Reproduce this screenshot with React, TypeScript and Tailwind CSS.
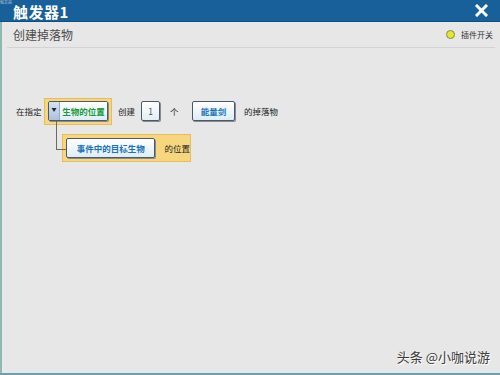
import React from "react";

const font = { fontFamily: '"Noto Sans CJK SC", "Noto Sans", sans-serif' };

export default function App() {
  return (
    <div className="relative w-[500px] h-[375px] overflow-hidden bg-[#e8e7e8]" style={font}>
      {/* title bar */}
      <div className="h-[22px] bg-[#17609a] flex items-center justify-between pl-[13px] pr-[12px] border-b border-[#0f4f80]">
        <span className="text-white font-bold text-[15px] leading-none tracking-[0.5px] pt-[2px]">触发器1</span>
        <svg width="13" height="13" viewBox="0 0 13 13">
          <path d="M2 2 L11 11 M11 2 L2 11" stroke="white" strokeWidth="3" strokeLinecap="square" />
        </svg>
      </div>
      <span className="absolute left-0 top-0 text-[4px] leading-none text-[#9fb7cc]">触发器</span>

      <div className="border-l-[2px] border-[#8fb8b0] h-[353px] flex flex-col">
        {/* header */}
        <div className="h-[26px] mx-[5px] flex items-center justify-between border-b border-[#d4d3d4] pl-[6px] pr-[2px]">
          <span className="text-[12px] text-[#4c4c4c] leading-none">创建掉落物</span>
          <div className="flex items-center gap-[6px]">
            <span className="w-[9px] h-[9px] rounded-full bg-[#e5e634] border border-[#8a8a3a]" />
            <span className="text-[8px] text-[#333]">插件开关</span>
          </div>
        </div>

        {/* content */}
        <div className="pl-[14px] pt-[49px] text-[8.5px] text-[#222] whitespace-nowrap">
          <div className="flex items-center h-[28px]">
            <span className="w-[28px]">在指定</span>
            <div className="bg-[#f6d77f] border border-[#e8bd55] px-[3px] py-[3px] w-[68px] h-[27px] flex items-center">
              <div className="flex h-[20px] w-[61px] border border-[#4a5a6a] rounded-[2px] shadow-[1px_1px_0_#8a8a8a] overflow-hidden">
                <div className="w-[11px] bg-gradient-to-b from-[#d3e3f1] to-[#a9c3dc] border-r border-[#9ab] flex items-start justify-center pt-[4px] text-[5px] leading-none text-[#223]">▼</div>
                <div className="flex-1 bg-gradient-to-b from-[#ffffff] to-[#dcedf7] flex items-center justify-center text-[#1b9a3a] font-bold">生物的位置</div>
              </div>
            </div>
            <span className="ml-[6px] w-[23px]">创建</span>
            <div className="w-[19px] h-[20px] border border-[#4a5a6a] rounded-[2px] bg-gradient-to-b from-white to-[#e3eef6] flex items-center justify-center shadow-[1px_1px_0_#8a8a8a] text-[#555]">1</div>
            <span className="ml-[10px] w-[22px] text-[#222]">个</span>
            <div className="w-[43px] h-[20px] border border-[#4a5a6a] rounded-[2px] bg-gradient-to-b from-white to-[#dcedf7] flex items-center justify-center shadow-[1px_1px_0_#8a8a8a] text-[#1b72b5] font-bold">能量剑</div>
            <span className="ml-[9px]">的掉落物</span>
          </div>

          <div className="relative flex ml-[46px] mt-[9px]">
            <div className="absolute left-[-6px] top-[-13px] w-[10px] h-[29px] border-l border-b border-[#6a6a6a]" />
            <div className="bg-[#f6d77f] border border-[#e8bd55] w-[129px] h-[28px] flex items-center pl-[3px]">
              <div className="w-[91px] h-[20px] border border-[#4a5a6a] rounded-[2px] bg-gradient-to-b from-white to-[#dcedf7] flex items-center justify-center shadow-[1px_1px_0_#8a8a8a] text-[#1b72b5] font-bold">事件中的目标生物</div>
              <span className="ml-[9px]">的位置</span>
            </div>
          </div>
        </div>
      </div>

      <div className="absolute left-0 right-0 bottom-0 h-[2px] bg-[#6f9fb0]" />
      <span
        className="absolute right-[10px] bottom-[12px] text-[13px] text-[#3a3a3a] leading-none"
        style={{ textShadow: "1px 1px 0 #fff" }}
      >
        头条 @小咖说游
      </span>
    </div>
  );
}
